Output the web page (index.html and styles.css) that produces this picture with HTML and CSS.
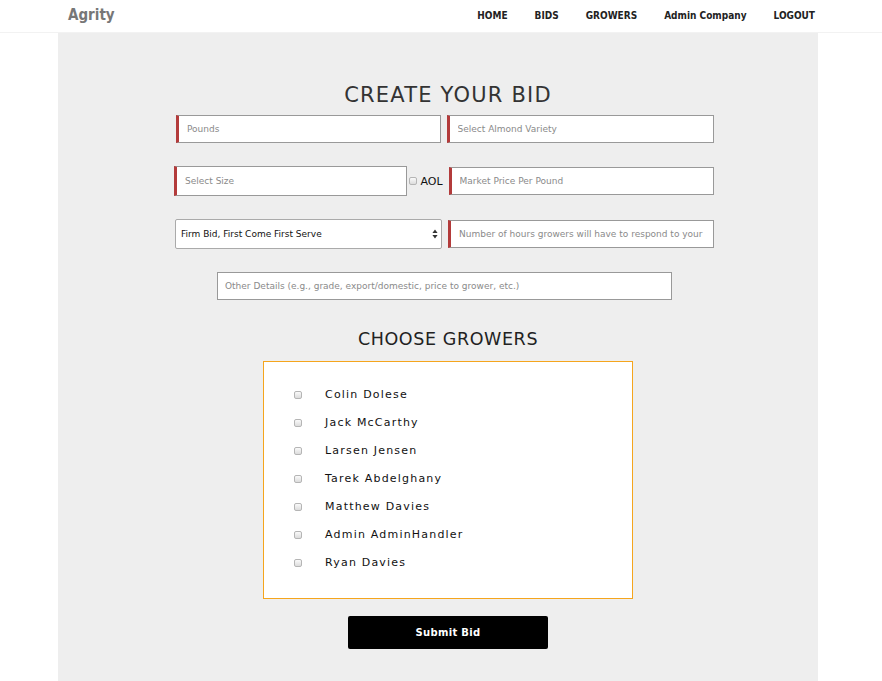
FILE: index.html
```html
<!DOCTYPE html>
<html>
<head>
<meta charset="utf-8">
<link rel="stylesheet" href="styles.css">
</head>
<body>
<header class="navbar">
  <div class="brand">Agrity</div>
  <nav class="nav">
    <a>HOME</a>
    <a>BIDS</a>
    <a>GROWERS</a>
    <a>Admin Company</a>
    <a>LOGOUT</a>
  </nav>
</header>
<main class="panel">
  <div class="form">
    <h1 class="title">CREATE YOUR BID</h1>
    <div class="row row1">
      <input class="field req w-pounds" placeholder="Pounds">
      <input class="field req w-variety" placeholder="Select Almond Variety">
    </div>
    <div class="row row2">
      <input class="field req w-size" placeholder="Select Size">
      <label class="aol"><input type="checkbox" class="cb"> AOL</label>
      <input class="field req w-price" placeholder="Market Price Per Pound">
    </div>
    <div class="row row3">
      <div class="select-wrap">
        <select class="field select">
          <option>Firm Bid, First Come First Serve</option>
        </select>
        <svg class="arrows" width="6" height="10" viewBox="0 0 6 10"><path d="M3 0.5 L5.6 4 H0.4 Z M3 9.5 L5.6 6 H0.4 Z" fill="#333"/></svg>
      </div>
      <input class="field req w-hours" placeholder="Number of hours growers will have to respond to your">
    </div>
    <div class="row row4">
      <input class="field w-other" placeholder="Other Details (e.g., grade, export/domestic, price to grower, etc.)">
    </div>
    <h2 class="subtitle">CHOOSE GROWERS</h2>
    <div class="growers">
      <label class="grower"><input type="checkbox" class="cb"><span>Colin Dolese</span></label>
      <label class="grower"><input type="checkbox" class="cb"><span>Jack McCarthy</span></label>
      <label class="grower"><input type="checkbox" class="cb"><span>Larsen Jensen</span></label>
      <label class="grower"><input type="checkbox" class="cb"><span>Tarek Abdelghany</span></label>
      <label class="grower"><input type="checkbox" class="cb"><span>Matthew Davies</span></label>
      <label class="grower"><input type="checkbox" class="cb"><span>Admin AdminHandler</span></label>
      <label class="grower"><input type="checkbox" class="cb"><span>Ryan Davies</span></label>
    </div>
    <div class="submit-row">
      <button class="submit">Submit Bid</button>
    </div>
  </div>
</main>
</body>
</html>
```
FILE: styles.css
```css
* { box-sizing: border-box; }
html, body { margin: 0; padding: 0; background: #fff; }
body {
  font-family: "DejaVu Sans", Verdana, sans-serif;
  color: #333;
  height: 681px;
  overflow: hidden;
}
.navbar {
  height: 33px;
  border-bottom: 1px solid #f2f2f2;
  display: flex;
  align-items: center;
  justify-content: space-between;
  padding: 0 67px 0 68px;
}
.brand {
  font-family: "DejaVu Sans Condensed", "DejaVu Sans", sans-serif;
  font-weight: bold;
  font-size: 15px;
  color: #777;
  margin-top: -2px;
}
.nav {
  display: flex;
  gap: 27px;
  margin-top: -2px;
}
.nav a {
  font-family: "DejaVu Sans Condensed", "DejaVu Sans", sans-serif;
  font-weight: bold;
  font-size: 10px;
  color: #222;
}
.panel {
  width: 760px;
  margin-left: 58px;
  background: #eee;
  height: 648px;
  padding-top: 1px;
}
.form {
  width: 540px;
  margin-left: 116px;
}
.title {
  margin: 48px 0 0 0;
  font-weight: normal;
  font-size: 21px;
  letter-spacing: 1.2px;
  text-align: center;
  line-height: 26px;
  color: #333;
  padding-left: 8px;
}
.row {
  display: flex;
  align-items: center;
}
.row1 { margin-top: 7px; padding-left: 2px; }
.row2 { margin-top: 23px; }
.row3 { margin-top: 23px; padding-left: 1px; }
.row4 { margin-top: 23px; padding-left: 43px; }
.field {
  height: 28px;
  border: 1px solid #999;
  background: #fff;
  font-family: "DejaVu Sans", Verdana, sans-serif;
  font-size: 9px;
  padding: 0 0 0 8px;
  color: #222;
  outline: none;
  border-radius: 0;
  margin: 0;
}
.field::placeholder { color: #8a8a8a; }
.req { border-left: 3px solid #b33b3b; }
.w-pounds { width: 265px; }
.w-variety { width: 268px; margin-left: 6px; }
.w-size { width: 234px; height: 30px; }
.w-price { width: 266px; margin-left: 6px; }
.w-hours { width: 266px; margin-left: 6px; }
.w-other { width: 455px; padding-left: 7px; }
.aol {
  display: flex;
  align-items: center;
  font-size: 11px;
  color: #111;
  margin-left: 2px;
  gap: 3px;
}
.cb {
  appearance: none;
  -webkit-appearance: none;
  width: 8px;
  height: 8px;
  border: 1px solid #b5b5b5;
  border-radius: 2px;
  background: linear-gradient(#fafafa, #dcdcdc);
  margin: 0;
  flex: none;
}
.select-wrap {
  position: relative;
  width: 267px;
  height: 30px;
}
.select {
  appearance: none;
  -webkit-appearance: none;
  width: 100%;
  height: 30px;
  padding-left: 5px;
  color: #111;
  border: 1px solid #aaa;
  border-radius: 2px;
}
.arrows {
  position: absolute;
  right: 4px;
  top: 10px;
}
.subtitle {
  margin: 27px 0 0 0;
  font-weight: normal;
  font-size: 17.5px;
  letter-spacing: 0.6px;
  line-height: 24px;
  text-align: center;
  color: #222;
  padding-left: 8px;
}
.growers {
  width: 370px;
  margin: 10px 0 0 89px;
  background: #fff;
  border: 1px solid #f5a51d;
  height: 238px;
  padding: 18px 0 0 30px;
}
.grower {
  display: flex;
  align-items: center;
  height: 28px;
}
.grower .cb { margin-top: 2px; }
.grower span {
  margin-left: 23px;
  font-size: 11px;
  letter-spacing: 1.2px;
  color: #111;
}
.submit-row {
  padding-left: 174px;
  margin-top: 17px;
}
.submit {
  width: 200px;
  height: 33px;
  background: #000;
  color: #fff;
  border: none;
  border-radius: 2px;
  font-family: "DejaVu Sans", Verdana, sans-serif;
  font-weight: bold;
  font-size: 10px;
  letter-spacing: 0.3px;
}
```
